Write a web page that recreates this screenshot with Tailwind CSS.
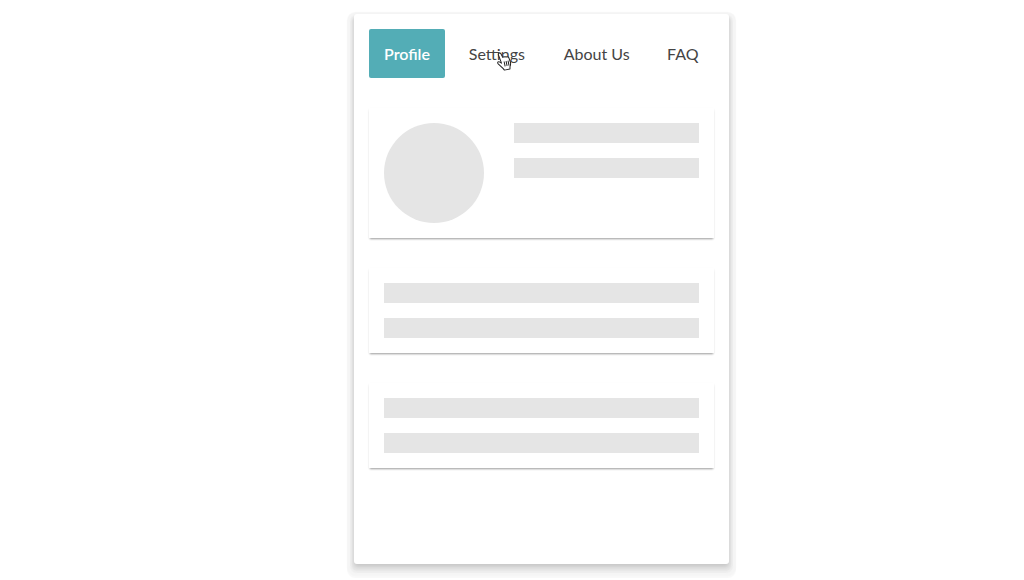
<!DOCTYPE html>
<html lang="en">
<head>
    <meta charset="UTF-8">
    <title>Profile</title>
    <script src="https://cdn.jsdelivr.net/npm/@tailwindcss/browser@4"></script>
</head>
<body class="bg-white font-['Lato',sans-serif] text-[#444] h-[580px] overflow-hidden">
    <!-- Phone frame -->
    <div class="relative ml-[354px] mt-[14px] w-[375px] h-[550px] bg-white p-[15px] rounded-[3px] shadow-[0_3px_4px_rgba(0,0,0,0.14),0_5px_1px_2px_#e8e8e8,0_5px_1px_4px_#eeeeee,0_5px_1px_7px_#f5f5f5,0_7px_1px_7px_#f9f9f9]">
        <!-- Tabs -->
        <nav class="flex text-[16px] leading-[49px] h-[49px] whitespace-nowrap">
            <a class="w-[76px] shrink-0 text-center bg-[#53adb6] text-white font-semibold rounded-[2px]">Profile</a>
            <a class="px-[15px] ml-[8.8px]">Settings</a>
            <a class="px-[15px] ml-[8.9px]">About Us</a>
            <a class="px-[15px] ml-[7.4px]">FAQ</a>
        </nav>

        <!-- Profile card -->
        <div class="mt-[30px] h-[130px] p-[15px] flex gap-[30px] bg-white shadow-[0_2px_2px_-1px_rgba(0,0,0,0.35),0_1px_2px_rgba(0,0,0,0.07)]">
            <div class="w-[100px] h-[100px] rounded-full bg-[#e5e5e5] shrink-0"></div>
            <div class="flex-1 flex flex-col gap-[15px]">
                <div class="h-[20px] bg-[#e5e5e5]"></div>
                <div class="h-[20px] bg-[#e5e5e5]"></div>
            </div>
        </div>

        <div class="mt-[30px] p-[15px] flex flex-col gap-[15px] bg-white shadow-[0_2px_2px_-1px_rgba(0,0,0,0.35),0_1px_2px_rgba(0,0,0,0.07)]">
            <div class="h-[20px] bg-[#e5e5e5]"></div>
            <div class="h-[20px] bg-[#e5e5e5]"></div>
        </div>

        <div class="mt-[30px] p-[15px] flex flex-col gap-[15px] bg-white shadow-[0_2px_2px_-1px_rgba(0,0,0,0.35),0_1px_2px_rgba(0,0,0,0.07)]">
            <div class="h-[20px] bg-[#e5e5e5]"></div>
            <div class="h-[20px] bg-[#e5e5e5]"></div>
        </div>

        <!-- Hand cursor -->
        <svg class="absolute left-[142px] top-[37px]" width="16" height="20" viewBox="0 0 16 20" fill="#fff" stroke="#222" stroke-width="1" stroke-linejoin="round">
            <g transform="rotate(-12 8 10)">
                <path d="M4.500 1.500c.8-.6 1.700-.2 2 .7l1 4c.8-.4 1.600-.4 2.200.1.8-.3 1.500-.2 2 .4.8-.2 1.500.2 1.700 1l.6 4.300c.2 1.700-.3 3.200-1.200 4.500l-.6 2.500H6.500L5.500 17 1.700 11.600c-.5-.8-.3-1.600.3-1.900.6-.3 1.300-.1 1.800.5l1.300 1.400L3.800 3c-.1-.6.200-1.200.7-1.500z"/>
                <path d="M8 10.500v5M10 10.500v5M12 10.500v5" fill="none"/>
            </g>
        </svg>
    </div>
</body>
</html>
